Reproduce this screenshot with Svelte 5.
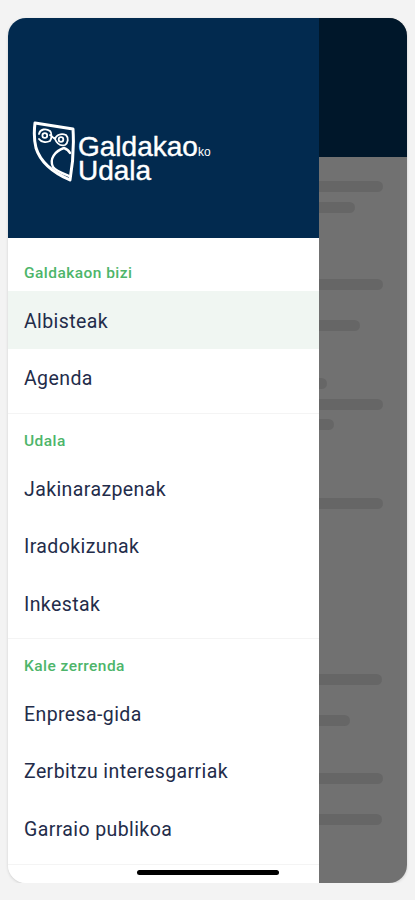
<script>
  const sections = [
    { title: "Galdakaon bizi", items: ["Albisteak", "Agenda"] },
    { title: "Udala", items: ["Jakinarazpenak", "Iradokizunak", "Inkestak"] },
    { title: "Kale zerrenda", items: ["Enpresa-gida", "Zerbitzu interesgarriak", "Garraio publikoa"] },
  ];

  // skeleton lines behind the scrim: right edge and gap above
  const bars = [
    { w: 64, gap: 24 },
    { w: 36, gap: 10 },
    { w: 64, gap: 66 },
    { w: 41, gap: 30 },
    { w: 8, gap: 47 },
    { w: 64, gap: 10 },
    { w: 15, gap: 9 },
    { w: 64, gap: 68 },
    { w: 63, gap: 165 },
    { w: 31, gap: 30 },
    { w: 64, gap: 47 },
    { w: 63, gap: 30 },
  ];
</script>

<div class="phone">
  <aside class="drawer">
    <header class="brand">
      <div class="logo">
        <svg class="owl" width="44" height="62" viewBox="0 0 44 62" fill="none" stroke="#fff" stroke-width="3" stroke-linejoin="round" stroke-linecap="round">
          <path d="M3 2 L41 8 C42 24 41 42 38 59 C22 52 9 43 4 27 C2 19 2 10 3 2 Z" />
          <path d="M7 13 C8 8 14 7 18 10 C20 12 20 17 18 20 C14 22 9 21 7 18 M18 14 L23 18 M23 18 C24 14 29 12 34 14 C37 17 36 22 33 24 C29 25 25 23 23 18" stroke-width="1.8" />
          <circle cx="12.8" cy="14.5" r="2.4" stroke-width="1.8" />
          <circle cx="29" cy="18.5" r="2.3" stroke-width="1.8" />
          <path d="M32 27 C23 30 17 38 21 46 C24 50 30 52 37 55 M32 27 C35 28 37 30 38 32" stroke-width="2.4" />
        </svg>
        <div class="wordmark">
          <div class="line">Galdakao<small>ko</small></div>
          <div class="line">Udala</div>
        </div>
      </div>
    </header>
    <nav class="menu">
      {#each sections as section}
        <section class="group">
          <h2>{section.title}</h2>
          {#each section.items as item}
            <div class="item" class:active={item === "Albisteak"}>{item}</div>
          {/each}
        </section>
      {/each}
    </nav>
  </aside>
  <div class="behind">
    <div class="topbar"></div>
    <div class="lines">
      {#each bars as bar}
        <div class="bar" style="width: {bar.w}px; margin-top: {bar.gap}px"></div>
      {/each}
    </div>
  </div>
  <div class="home"></div>
</div>

<style>
  :global(body) {
    margin: 0;
    background: #f3f3f3;
  }

  .phone {
    position: relative;
    display: flex;
    width: 399px;
    height: 865px;
    margin: 18px 0 0 8px;
    border-radius: 18px;
    overflow: hidden;
    font-family: Roboto, sans-serif;
    box-shadow: 0 1px 3px rgba(0, 0, 0, 0.15);
  }

  .drawer {
    width: 311px;
    flex-shrink: 0;
    display: flex;
    flex-direction: column;
    background: #fff;
    z-index: 1;
  }

  .brand {
    height: 220px;
    flex-shrink: 0;
    box-sizing: border-box;
    padding: 103px 0 0 24px;
    background: #022a4f;
  }

  .logo {
    display: flex;
    align-items: flex-start;
    gap: 2px;
    color: #fff;
  }

  .owl {
    flex-shrink: 0;
  }

  .wordmark {
    margin-top: 14px;
    font-family: "Liberation Sans", Arial, sans-serif;
    font-size: 28px;
    line-height: 24px;
    -webkit-text-stroke: 0.4px #fff;
  }

  .line small {
    font-size: 12px;
    line-height: 0;
    -webkit-text-stroke: 0;
  }

  .menu {
    display: flex;
    flex-direction: column;
  }

  .group {
    height: 225px;
    box-sizing: border-box;
    padding-top: 18px;
    border-bottom: 1px solid #f4f4f4;
  }

  .group:first-child {
    height: 176px;
    padding-top: 26px;
  }

  .group:last-child {
    height: 226px;
  }

  h2 {
    margin: 0 0 9px;
    padding-left: 16px;
    font-size: 15.5px;
    line-height: 18px;
    font-weight: 500;
    letter-spacing: 0.45px;
    color: #4db56a;
  }

  .item {
    height: 57.5px;
    box-sizing: border-box;
    display: flex;
    align-items: center;
    padding: 3px 0 0 16px;
    font-size: 19.5px;
    letter-spacing: 0.4px;
    color: #232c4a;
  }

  .item.active {
    background: #f0f6f2;
  }

  .behind {
    flex: 1;
    min-width: 0;
    display: flex;
    flex-direction: column;
    background: #717171;
  }

  .topbar {
    height: 139px;
    flex-shrink: 0;
    background: #00172a;
  }

  .lines {
    display: flex;
    flex-direction: column;
  }

  .bar {
    height: 11px;
    flex-shrink: 0;
    border-radius: 0 6px 6px 0;
    background: #666;
    filter: blur(0.6px);
  }

  .home {
    position: absolute;
    left: 129px;
    bottom: 8px;
    width: 142px;
    height: 5px;
    border-radius: 3px;
    background: #000;
    z-index: 2;
  }
</style>
